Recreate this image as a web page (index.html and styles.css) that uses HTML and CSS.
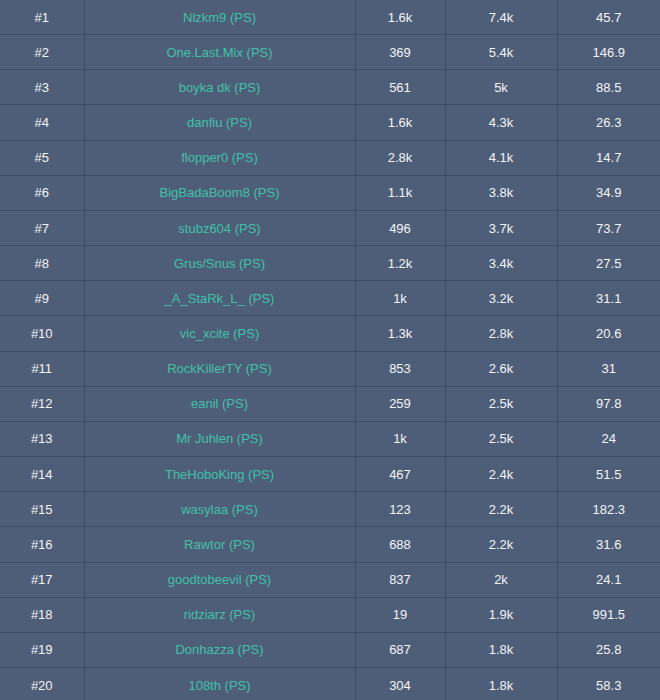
FILE: index.html
```html
<!DOCTYPE html>
<html>
<head>
<meta charset="utf-8">
<link rel="stylesheet" href="styles.css">
</head>
<body>
<table class="board">
<colgroup><col class="c-rank"><col class="c-name"><col class="c-a"><col class="c-b"><col class="c-c"></colgroup>
<tbody>
<tr><td>#1</td><td class="name">Nlzkm9 (PS)</td><td>1.6k</td><td>7.4k</td><td>45.7</td></tr>
<tr><td>#2</td><td class="name">One.Last.Mix (PS)</td><td>369</td><td>5.4k</td><td>146.9</td></tr>
<tr><td>#3</td><td class="name">boyka dk (PS)</td><td>561</td><td>5k</td><td>88.5</td></tr>
<tr><td>#4</td><td class="name">danfiu (PS)</td><td>1.6k</td><td>4.3k</td><td>26.3</td></tr>
<tr><td>#5</td><td class="name">flopper0 (PS)</td><td>2.8k</td><td>4.1k</td><td>14.7</td></tr>
<tr><td>#6</td><td class="name">BigBadaBoom8 (PS)</td><td>1.1k</td><td>3.8k</td><td>34.9</td></tr>
<tr><td>#7</td><td class="name">stubz604 (PS)</td><td>496</td><td>3.7k</td><td>73.7</td></tr>
<tr><td>#8</td><td class="name">Grus/Snus (PS)</td><td>1.2k</td><td>3.4k</td><td>27.5</td></tr>
<tr><td>#9</td><td class="name">_A_StaRk_L_ (PS)</td><td>1k</td><td>3.2k</td><td>31.1</td></tr>
<tr><td>#10</td><td class="name">vic_xcite (PS)</td><td>1.3k</td><td>2.8k</td><td>20.6</td></tr>
<tr><td>#11</td><td class="name">RockKillerTY (PS)</td><td>853</td><td>2.6k</td><td>31</td></tr>
<tr><td>#12</td><td class="name">eanil (PS)</td><td>259</td><td>2.5k</td><td>97.8</td></tr>
<tr><td>#13</td><td class="name">Mr Juhlen (PS)</td><td>1k</td><td>2.5k</td><td>24</td></tr>
<tr><td>#14</td><td class="name">TheHoboKing (PS)</td><td>467</td><td>2.4k</td><td>51.5</td></tr>
<tr><td>#15</td><td class="name">wasylaa (PS)</td><td>123</td><td>2.2k</td><td>182.3</td></tr>
<tr><td>#16</td><td class="name">Rawtor (PS)</td><td>688</td><td>2.2k</td><td>31.6</td></tr>
<tr><td>#17</td><td class="name">goodtobeevil (PS)</td><td>837</td><td>2k</td><td>24.1</td></tr>
<tr><td>#18</td><td class="name">ridziarz (PS)</td><td>19</td><td>1.9k</td><td>991.5</td></tr>
<tr><td>#19</td><td class="name">Donhazza (PS)</td><td>687</td><td>1.8k</td><td>25.8</td></tr>
<tr><td>#20</td><td class="name">108th (PS)</td><td>304</td><td>1.8k</td><td>58.3</td></tr>
</tbody>
</table>
</body>
</html>
```

FILE: styles.css
```css
html, body {
  margin: 0;
  padding: 0;
  background: #4f5e78;
}
.board {
  width: 660px;
  border-collapse: collapse;
  table-layout: fixed;
  margin-top: -1px;
  font-family: "Liberation Sans", Arial, sans-serif;
  font-size: 13px;
  color: #f2f4f7;
}
.c-rank { width: 84px; }
.c-name { width: 271px; }
.c-a { width: 90px; }
.c-b { width: 112px; }
.c-c { width: 103px; }
.board td {
  height: 34.16px;
  padding: 0;
  text-align: center;
  vertical-align: middle;
  border: 1px solid #3e4b63;
}
.board tr td:first-child { border-left: none; }
.board tr td:last-child { border-right: none; }
.board td.name {
  color: #3fc1a9;
}
```
